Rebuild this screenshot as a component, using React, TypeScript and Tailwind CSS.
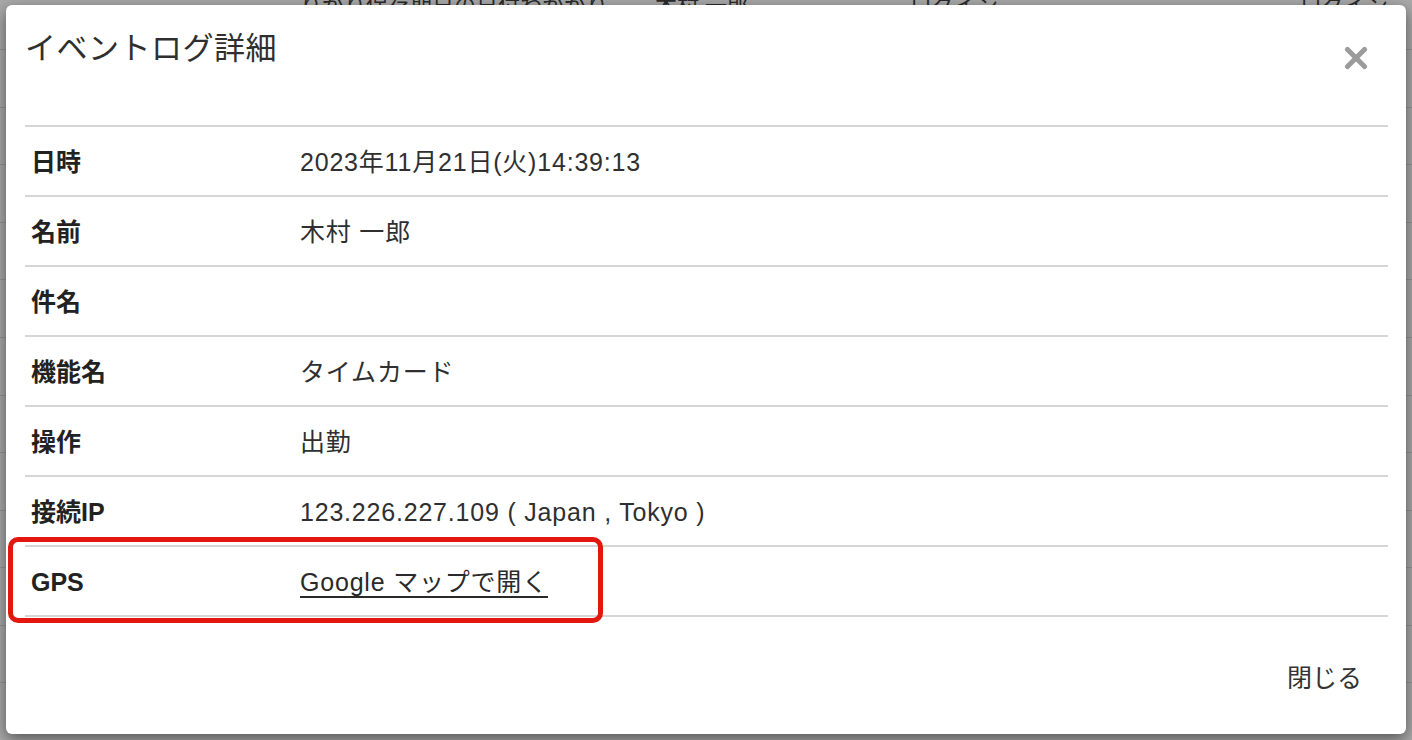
import React from "react";

const rows: { label: string; value: React.ReactNode }[] = [
  { label: "日時", value: "2023年11月21日(火)14:39:13" },
  { label: "名前", value: "木村 一郎" },
  { label: "件名", value: "" },
  { label: "機能名", value: "タイムカード" },
  { label: "操作", value: "出勤" },
  { label: "接続IP", value: "123.226.227.109 ( Japan , Tokyo )" },
  {
    label: "GPS",
    value: (
      <a href="#" className="underline decoration-[1.5px] underline-offset-[5px] text-[#2a2a2a]">
        Google マップで開く
      </a>
    ),
  },
];

const bgRows = Array.from({ length: 12 });

export default function App() {
  return (
    <div
      className="relative w-[1412px] h-[740px] overflow-hidden bg-[#a9a9a9]"
      style={{ fontFamily: '"Liberation Sans", "Noto Sans CJK JP", sans-serif' }}
    >
      {/* page behind the dimmed overlay */}
      <div className="absolute inset-0 flex flex-col">
        <div className="flex h-[52px] items-end text-[22px] text-[#2b2b2b] -translate-y-[27px]">
          <span className="w-[300px]" />
          <span className="w-[355px]">りがり保存期日の日付わかがり</span>
          <span className="w-[255px]">木村 一郎</span>
          <span className="w-[390px]">ログイン</span>
          <span>ログイン</span>
        </div>
        {bgRows.map((_, i) => (
          <div key={i} className="h-[61px] border-t border-[#959595]" />
        ))}
      </div>

      {/* modal */}
      <div className="absolute left-[6px] top-[5px] w-[1400px] h-[729px] bg-white rounded-[6px] shadow-[0_5px_15px_rgba(0,0,0,0.5)] flex flex-col">
        <div className="h-[120px] flex justify-between items-start pl-[19px] pr-[38px] pt-[26px]">
          <h4 className="text-[31px] leading-[36px] text-[#2f2f2f] font-normal tracking-[0.5px]">
            イベントログ詳細
          </h4>
          <button className="mt-[15px] w-[24px] h-[24px]" aria-label="close">
            <svg width="24" height="24" viewBox="0 0 24 24">
              <line x1="3.5" y1="3.5" x2="20.5" y2="20.5" stroke="#9b9b9b" strokeWidth="5" strokeLinecap="round" />
              <line x1="20.5" y1="3.5" x2="3.5" y2="20.5" stroke="#9b9b9b" strokeWidth="5" strokeLinecap="round" />
            </svg>
          </button>
        </div>

        <div className="ml-[19px] mr-[18px] border-t-2 border-[#d6d6d6]">
          {rows.map((r) => (
            <div key={r.label} className="h-[70px] flex items-center pt-[3px] border-b-2 border-[#d6d6d6]">
              <div className="w-[275px] pl-[6px] text-[25px] font-bold text-[#222]">{r.label}</div>
              <div className="text-[25px] tracking-[0.8px] text-[#2f2f2f]">{r.value}</div>
            </div>
          ))}
        </div>

        <div className="flex-1 flex justify-end items-start pt-[45px] pr-[44px]">
          <button className="text-[25px] leading-[32px] text-[#333]">閉じる</button>
        </div>
      </div>

      {/* red annotation highlight */}
      <div className="absolute left-[8px] top-[537px] w-[595px] h-[86px] border-[5px] border-[#e3170f] rounded-[10px]" />
    </div>
  );
}
